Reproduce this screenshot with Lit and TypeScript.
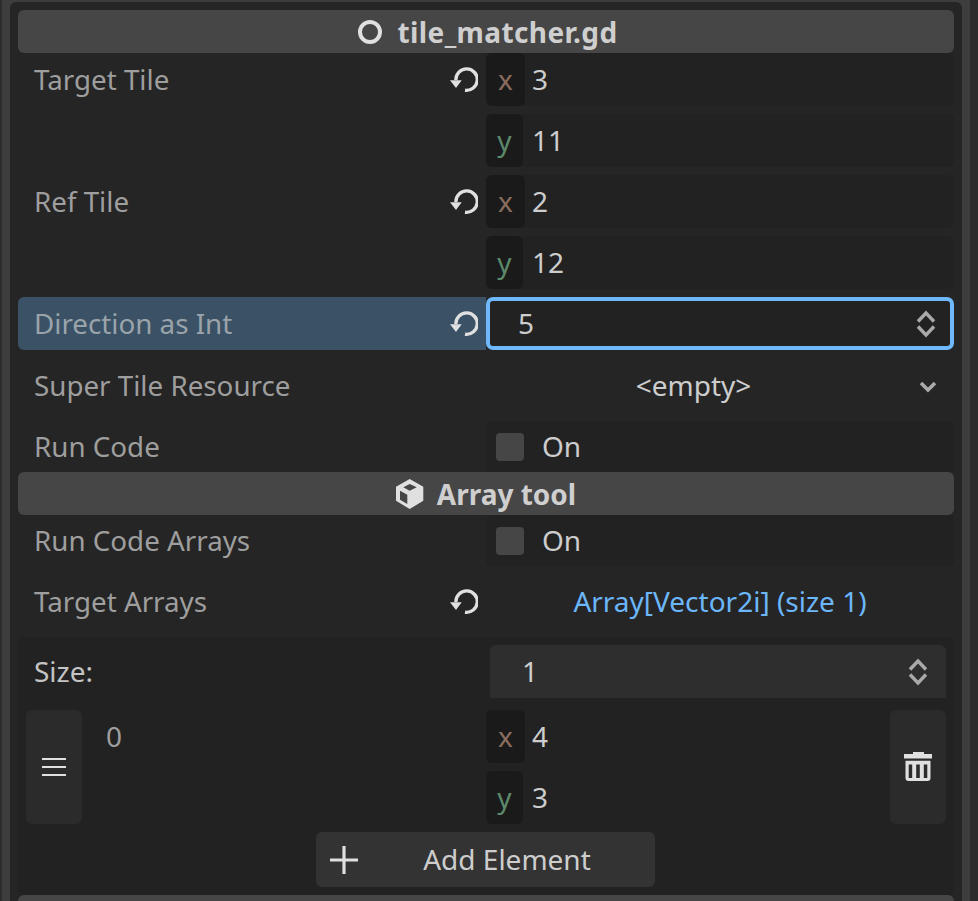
import { LitElement, html, css } from "lit";
import { customElement } from "lit/decorators.js";

const revert = html`<svg class="revert" viewBox="0 0 28 28" width="28" height="28">
  <path d="M5.9 13 A10.7 10.7 0 1 1 15 23.2" fill="none" stroke="#e0e0e0" stroke-width="3.4" />
  <path d="M0 13.3 H11.7 L6 21 Z" fill="#e0e0e0" />
</svg>`;

const updown = html`<svg class="updown" viewBox="0 0 20 28" width="20" height="28">
  <path d="M2 11.5 L10 3 L18 11.5 M2 16.5 L10 25 L18 16.5" fill="none" stroke="#a9a9a9" stroke-width="3.4" />
</svg>`;

@customElement("app-root")
export class AppRoot extends LitElement {
  static styles = css`
    :host {
      display: block;
      width: 978px;
      height: 901px;
      overflow: hidden;
      background: #2d2d2d;
      font-family: "Noto Sans", sans-serif;
      font-size: 28px;
      color: #cdcdcd;
    }
    .frame {
      box-sizing: border-box;
      height: 901px;
      margin: 0 8px 0 2px;
      background: #3d3d3d;
      padding: 2px 8px 0 8px;
    }
    .dock {
      box-sizing: border-box;
      height: 899px;
      background: #252525;
      border-radius: 6px 6px 0 0;
      padding: 8px 8px 0 8px;
      display: flex;
      flex-direction: column;
      overflow: hidden;
    }
    .header {
      flex: none;
      height: 43px;
      background: #464646;
      border-radius: 6px;
      display: flex;
      align-items: center;
      justify-content: center;
      gap: 13px;
      font-weight: 700;
      color: #cfcfcf;
    }
    .header svg {
      flex: none;
    }
    .script {
      gap: 16px;
      padding-left: 3px;
      letter-spacing: 0.4px;
    }
    .row {
      flex: none;
      display: grid;
      grid-template-columns: 468px 468px;
    }
    .space-8 {
      margin-top: 8px;
    }
    .space-9 {
      margin-top: 9px;
    }
    .name {
      display: flex;
      align-items: flex-start;
      justify-content: space-between;
      box-sizing: border-box;
      height: 53px;
      padding: 0 8px 0 16px;
      font-size: 27.75px;
      line-height: 53px;
      color: #9e9e9e;
      white-space: nowrap;
    }
    .compact .name {
      height: 51px;
      line-height: 51px;
    }
    .revert {
      margin-top: 14px;
    }
    .vector {
      display: flex;
      flex-direction: column;
      gap: 8px;
    }
    .field {
      display: flex;
      align-items: center;
      height: 53px;
      background: #222222;
      border-radius: 6px;
      line-height: 53px;
      white-space: nowrap;
    }
    .compact .field {
      height: 51px;
      line-height: 51px;
    }
    .axis {
      flex: none;
      height: 53px;
      width: 39px;
      background: #1a1a1a;
      border-radius: 6px;
      text-align: center;
      margin-right: 7px;
    }
    .axis.x {
      color: #8a6d5e;
    }
    .axis.y {
      width: 37px;
      margin-right: 9px;
      color: #5c8a6b;
    }
    .highlight {
      background: #3b5266;
      border-radius: 6px 0 0 6px;
      color: #9aa3aa;
    }
    .focus {
      box-sizing: border-box;
      height: 53px;
      line-height: 45px;
      background: #222222;
      border: 4px solid #6fb8fb;
      border-radius: 7px;
      display: flex;
      align-items: center;
      justify-content: space-between;
      padding: 0 14px 0 28px;
    }
    .plain {
      position: relative;
      display: flex;
      align-items: center;
      justify-content: center;
      height: 53px;
      line-height: 53px;
    }
    .resource {
      box-sizing: border-box;
      padding-right: 53px;
    }
    .chevron {
      position: absolute;
      right: 17px;
      top: 21px;
    }
    .check {
      flex: none;
      width: 28px;
      height: 28px;
      border-radius: 4px;
      background: #464646;
      margin: 0 18px 0 10px;
    }
    .link {
      color: #6cb6fa;
    }
    .panel {
      flex: none;
      margin-top: 9px;
      background: #222222;
      border-radius: 6px;
      padding: 8px;
      height: 258px;
      box-sizing: border-box;
    }
    .size-row {
      display: grid;
      grid-template-columns: 464px 456px;
      height: 53px;
    }
    .size-label {
      line-height: 53px;
      padding-left: 8px;
      color: #c4c4c4;
    }
    .spin {
      display: flex;
      align-items: center;
      justify-content: space-between;
      height: 53px;
      line-height: 53px;
      background: #2e2e2e;
      border-radius: 6px 6px 0 0;
      padding: 0 18px 0 32px;
    }
    .item {
      display: grid;
      grid-template-columns: 56px 404px 404px 56px;
      margin-top: 12px;
      height: 114px;
    }
    .handle {
      background: #2b2b2b;
      border-radius: 6px;
      display: flex;
      align-items: center;
      justify-content: center;
    }
    .index {
      line-height: 53px;
      padding-left: 24px;
      color: #9e9e9e;
    }
    .item .field {
      background: transparent;
    }
    .add {
      margin: 8px 0 0 290px;
      width: 339px;
      height: 55px;
      line-height: 55px;
      background: #333333;
      border-radius: 6px;
      display: flex;
      align-items: center;
      box-sizing: border-box;
      padding-left: 13px;
    }
    .add span {
      flex: 1;
      text-align: center;
    }
    .next {
      flex: none;
      height: 43px;
      background: #464646;
      border-radius: 6px;
    }
  `;

  private vec(x: string, y: string) {
    return html`<div class="vector">
      <div class="field"><span class="axis x">x</span>${x}</div>
      <div class="field"><span class="axis y">y</span>${y}</div>
    </div>`;
  }

  render() {
    return html`<div class="frame">
      <div class="dock">
        <div class="header script">
          <svg viewBox="0 0 24 24" width="24" height="24">
            <circle cx="12" cy="12" r="10" fill="none" stroke="#e0e0e0" stroke-width="4" />
          </svg>
          tile_matcher.gd
        </div>

        <div class="row">
          <div class="name">Target Tile ${revert}</div>
          ${this.vec("3", "11")}
        </div>
        <div class="row space-8">
          <div class="name">Ref Tile ${revert}</div>
          ${this.vec("2", "12")}
        </div>
        <div class="row space-8">
          <div class="name highlight">Direction as Int ${revert}</div>
          <div class="focus">5 ${updown}</div>
        </div>
        <div class="row space-9">
          <div class="name">Super Tile Resource</div>
          <div class="plain resource">
            &lt;empty&gt;
            <svg class="chevron" viewBox="0 0 18 14" width="18" height="14">
              <path d="M2 3 L9 10 L16 3" fill="none" stroke="#a9a9a9" stroke-width="3.6" />
            </svg>
          </div>
        </div>
        <div class="row compact space-9">
          <div class="name">Run Code</div>
          <div class="field"><span class="check"></span>On</div>
        </div>

        <div class="header">
          <svg viewBox="0 0 28 30" width="28" height="30">
            <path
              d="M13.7 0 L27.3 7.7 V21.7 L13.7 30 L0 21.7 V7.7 Z M13.7 5 L7.3 8.3 L13.7 11.7 L20.7 8.3 Z M4 11.7 V20.7 L11.3 25 V15.7 Z"
              fill="#e0e0e0"
              fill-rule="evenodd"
            />
          </svg>
          Array tool
        </div>

        <div class="row compact">
          <div class="name">Run Code Arrays</div>
          <div class="field"><span class="check"></span>On</div>
        </div>
        <div class="row space-9">
          <div class="name">Target Arrays ${revert}</div>
          <div class="plain link">Array[Vector2i] (size 1)</div>
        </div>

        <div class="panel">
          <div class="size-row">
            <div class="size-label">Size:</div>
            <div class="spin">1 ${updown}</div>
          </div>
          <div class="item">
            <div class="handle">
              <svg viewBox="0 0 24 20" width="24" height="20">
                <path d="M0 2 H24 M0 10 H24 M0 18 H24" stroke="#e0e0e0" stroke-width="2" fill="none" />
              </svg>
            </div>
            <div class="index">0</div>
            ${this.vec("4", "3")}
            <div class="handle">
              <svg viewBox="0 0 28 30" width="28" height="30">
                <path d="M9 0 H20 V2 H28 V6.5 H0 V2 H9 Z" fill="#e0e0e0" />
                <path
                  d="M1.5 8.7 H26.5 V26 Q26.5 29 23.5 29 H4.5 Q1.5 29 1.5 26 Z M4.7 12.5 V26 H8.2 V12.5 Z M12.2 12.5 V26 H15.8 V12.5 Z M19.8 12.5 V26 H23.3 V12.5 Z"
                  fill="#e0e0e0"
                  fill-rule="evenodd"
                />
              </svg>
            </div>
          </div>
          <div class="add">
            <svg viewBox="0 0 30 30" width="30" height="30">
              <path d="M15 1 V29 M1 15 H29" stroke="#e0e0e0" stroke-width="3.2" fill="none" />
            </svg>
            <span>Add Element</span>
          </div>
        </div>
        <div class="next"></div>
      </div>
    </div>`;
  }
}
